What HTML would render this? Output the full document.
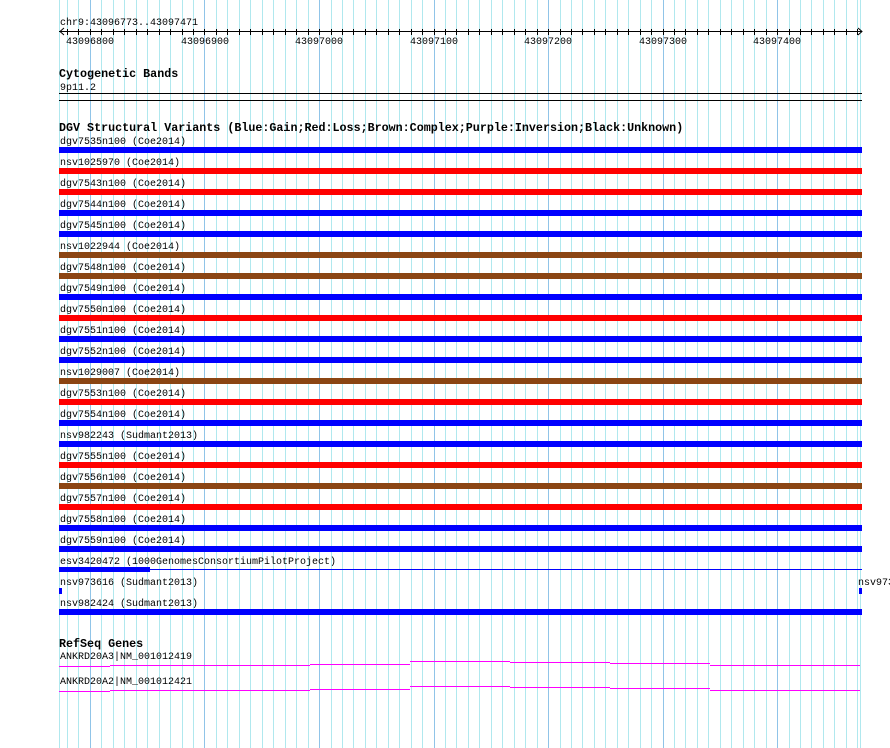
<!DOCTYPE html>
<html><head><meta charset="utf-8"><style>
html,body{margin:0;padding:0;background:#fff;width:890px;height:748px;overflow:hidden}
svg{display:block}
text{font-family:"Liberation Mono","DejaVu Sans Mono",monospace;font-size:10px;fill:#000}
.b{font-weight:bold;font-size:11.7px}
</style></head><body>
<svg width="890" height="748" viewBox="0 0 890 748" xmlns="http://www.w3.org/2000/svg" shape-rendering="crispEdges">
<path stroke="#b0e8ee" stroke-width="1" fill="none" d="M59.5,0V748M67.5,0V748M78.5,0V748M101.5,0V748M113.5,0V748M124.5,0V748M136.5,0V748M147.5,0V748M159.5,0V748M170.5,0V748M182.5,0V748M193.5,0V748M216.5,0V748M227.5,0V748M239.5,0V748M250.5,0V748M262.5,0V748M273.5,0V748M285.5,0V748M296.5,0V748M308.5,0V748M331.5,0V748M342.5,0V748M353.5,0V748M365.5,0V748M376.5,0V748M388.5,0V748M399.5,0V748M411.5,0V748M422.5,0V748M445.5,0V748M456.5,0V748M468.5,0V748M479.5,0V748M491.5,0V748M502.5,0V748M514.5,0V748M525.5,0V748M537.5,0V748M560.5,0V748M571.5,0V748M582.5,0V748M594.5,0V748M605.5,0V748M617.5,0V748M628.5,0V748M640.5,0V748M651.5,0V748M674.5,0V748M685.5,0V748M697.5,0V748M708.5,0V748M720.5,0V748M731.5,0V748M743.5,0V748M754.5,0V748M766.5,0V748M789.5,0V748M800.5,0V748M811.5,0V748M823.5,0V748M834.5,0V748M846.5,0V748M857.5,0V748M860.5,0V748"/>
<path stroke="#90c4e8" stroke-width="1" fill="none" d="M90.5,0V748M204.5,0V748M319.5,0V748M434.5,0V748M548.5,0V748M663.5,0V748M777.5,0V748"/>
<!-- ruler -->
<text x="60" y="25">chr9:43096773..43097471</text>
<rect x="59" y="31" width="803" height="1" fill="#000"/>
<path stroke="#000" fill="none" d="M67.5,29V35M78.5,29V35M90.5,29V35M101.5,29V35M113.5,29V35M124.5,29V35M136.5,29V35M147.5,29V35M159.5,29V35M170.5,29V35M182.5,29V35M193.5,29V35M204.5,29V35M216.5,29V35M227.5,29V35M239.5,29V35M250.5,29V35M262.5,29V35M273.5,29V35M285.5,29V35M296.5,29V35M308.5,29V35M319.5,29V35M331.5,29V35M342.5,29V35M353.5,29V35M365.5,29V35M376.5,29V35M388.5,29V35M399.5,29V35M411.5,29V35M422.5,29V35M434.5,29V35M445.5,29V35M456.5,29V35M468.5,29V35M479.5,29V35M491.5,29V35M502.5,29V35M514.5,29V35M525.5,29V35M537.5,29V35M548.5,29V35M560.5,29V35M571.5,29V35M582.5,29V35M594.5,29V35M605.5,29V35M617.5,29V35M628.5,29V35M640.5,29V35M651.5,29V35M663.5,29V35M674.5,29V35M685.5,29V35M697.5,29V35M708.5,29V35M720.5,29V35M731.5,29V35M743.5,29V35M754.5,29V35M766.5,29V35M777.5,29V35M789.5,29V35M800.5,29V35M811.5,29V35M823.5,29V35M834.5,29V35M846.5,29V35M857.5,29V35"/>
<path d="M64,28 L60,31.5 L64,35 M858,28 L862,31.5 L858,35" stroke="#000" fill="none" shape-rendering="auto"/>
<text x="66" y="44">43096800</text>
<text x="181" y="44">43096900</text>
<text x="295" y="44">43097000</text>
<text x="410" y="44">43097100</text>
<text x="524" y="44">43097200</text>
<text x="639" y="44">43097300</text>
<text x="753" y="44">43097400</text>
<text class="b" x="59" y="77">Cytogenetic Bands</text>
<text x="60" y="90">9p11.2</text>
<rect x="59" y="93" width="803" height="1" fill="#000"/>
<rect x="59" y="100" width="803" height="1" fill="#000"/>
<text class="b" x="59" y="131">DGV Structural Variants (Blue:Gain;Red:Loss;Brown:Complex;Purple:Inversion;Black:Unknown)</text>
<g>
<text x="60" y="144">dgv7535n100 (Coe2014)</text><rect x="59" y="147" width="803" height="6" fill="#00f"/>
<text x="60" y="165">nsv1025970 (Coe2014)</text><rect x="59" y="168" width="803" height="6" fill="#f00"/>
<text x="60" y="186">dgv7543n100 (Coe2014)</text><rect x="59" y="189" width="803" height="6" fill="#f00"/>
<text x="60" y="207">dgv7544n100 (Coe2014)</text><rect x="59" y="210" width="803" height="6" fill="#00f"/>
<text x="60" y="228">dgv7545n100 (Coe2014)</text><rect x="59" y="231" width="803" height="6" fill="#00f"/>
<text x="60" y="249">nsv1022944 (Coe2014)</text><rect x="59" y="252" width="803" height="6" fill="#8b4513"/>
<text x="60" y="270">dgv7548n100 (Coe2014)</text><rect x="59" y="273" width="803" height="6" fill="#8b4513"/>
<text x="60" y="291">dgv7549n100 (Coe2014)</text><rect x="59" y="294" width="803" height="6" fill="#00f"/>
<text x="60" y="312">dgv7550n100 (Coe2014)</text><rect x="59" y="315" width="803" height="6" fill="#f00"/>
<text x="60" y="333">dgv7551n100 (Coe2014)</text><rect x="59" y="336" width="803" height="6" fill="#00f"/>
<text x="60" y="354">dgv7552n100 (Coe2014)</text><rect x="59" y="357" width="803" height="6" fill="#00f"/>
<text x="60" y="375">nsv1029007 (Coe2014)</text><rect x="59" y="378" width="803" height="6" fill="#8b4513"/>
<text x="60" y="396">dgv7553n100 (Coe2014)</text><rect x="59" y="399" width="803" height="6" fill="#f00"/>
<text x="60" y="417">dgv7554n100 (Coe2014)</text><rect x="59" y="420" width="803" height="6" fill="#00f"/>
<text x="60" y="438">nsv982243 (Sudmant2013)</text><rect x="59" y="441" width="803" height="6" fill="#00f"/>
<text x="60" y="459">dgv7555n100 (Coe2014)</text><rect x="59" y="462" width="803" height="6" fill="#f00"/>
<text x="60" y="480">dgv7556n100 (Coe2014)</text><rect x="59" y="483" width="803" height="6" fill="#8b4513"/>
<text x="60" y="501">dgv7557n100 (Coe2014)</text><rect x="59" y="504" width="803" height="6" fill="#f00"/>
<text x="60" y="522">dgv7558n100 (Coe2014)</text><rect x="59" y="525" width="803" height="6" fill="#00f"/>
<text x="60" y="543">dgv7559n100 (Coe2014)</text><rect x="59" y="546" width="803" height="6" fill="#00f"/>
<text x="60" y="564">esv3420472 (1000GenomesConsortiumPilotProject)</text>
<rect x="59" y="569" width="803" height="1" fill="#00f"/><rect x="59" y="567" width="91" height="5" fill="#00f"/>
<text x="60" y="585">nsv973616 (Sudmant2013)</text><rect x="59" y="588" width="3" height="6" fill="#00f"/>
<text x="858" y="585">nsv973616</text><rect x="859" y="588" width="3" height="6" fill="#00f"/>
<text x="60" y="606">nsv982424 (Sudmant2013)</text><rect x="59" y="609" width="803" height="6" fill="#00f"/>
</g>
<text class="b" x="59" y="647">RefSeq Genes</text>
<text x="60" y="659">ANKRD20A3|NM_001012419</text>
<path d="M59,666.5H110M110,665.5H210M210,665.5H310M310,664.5H410M410,661.5H510M510,662.5H610M610,663.5H710M710,665.5H860" stroke="#f0f" fill="none"/>
<text x="60" y="684">ANKRD20A2|NM_001012421</text>
<path d="M59,691.5H110M110,690.5H210M210,690.5H310M310,689.5H410M410,686.5H510M510,687.5H610M610,688.5H710M710,690.5H860" stroke="#f0f" fill="none"/>
</svg>
</body></html>
